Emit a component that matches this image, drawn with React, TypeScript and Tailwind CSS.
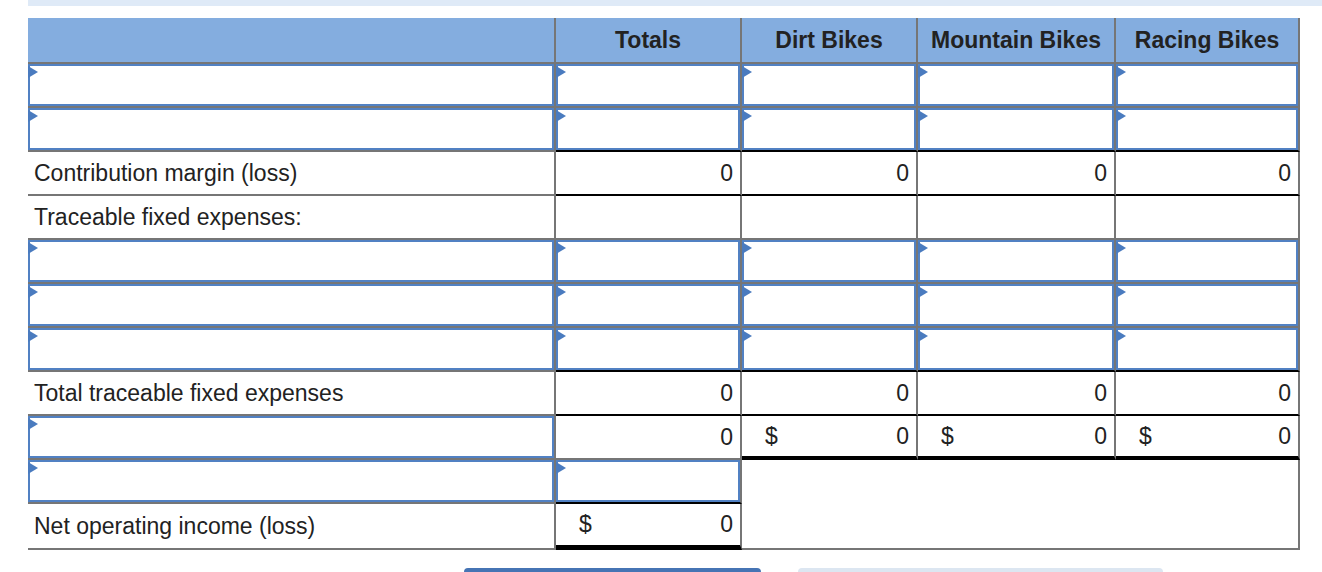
import React from "react";

const font = "font-['Liberation_Sans',Arial,Helvetica,sans-serif]";

type Bottom = "gray" | "black" | "thick" | "thicker";

const bottomClass: Record<Bottom, string> = {
  gray: "border-b-2 border-b-[#767676]",
  black: "border-b-2 border-b-black",
  thick: "border-b-[4px] border-b-black",
  thicker: "border-b-[5px] border-b-black",
};

const HeaderCell = ({ text }: { text?: string }) => (
  <div className="flex items-center justify-center border-r-2 border-b-2 border-[#767676] bg-[#84addf] text-[23px] font-bold text-[#222]">
    {text}
  </div>
);

const InputCell = ({ bottom = "gray" }: { bottom?: Bottom }) => (
  <div className={`border-r-2 border-r-[#767676] ${bottomClass[bottom]}`}>
    <div className="relative h-full w-full border-2 border-[#5181c3] bg-white">
      <svg
        className="absolute left-[-2px] top-0"
        width="10"
        height="12"
        viewBox="0 0 10 12"
      >
        <polygon points="0,0 10,6 0,12" fill="#4a7bbf" />
      </svg>
    </div>
  </div>
);

const LabelCell = ({ text }: { text?: string }) => (
  <div className="flex items-center border-r-2 border-b-2 border-[#767676] pl-[6px] text-[23px] text-[#222]">
    {text}
  </div>
);

const NumCell = ({
  value,
  dollar = false,
  bottom = "black",
}: {
  value?: string;
  dollar?: boolean;
  bottom?: Bottom;
}) => (
  <div
    className={`flex items-center justify-between border-r-2 border-r-[#767676] pl-[23px] pr-[7px] text-[23px] text-[#222] ${bottomClass[bottom]}`}
  >
    <span>{dollar ? "$" : ""}</span>
    <span>{value}</span>
  </div>
);

export default function App() {
  return (
    <div className={`min-h-screen bg-white ${font}`}>
      <div className="ml-[28px] h-[6px] bg-[#dfeaf7]" />

      <div className="ml-[28px] mt-[12px] grid w-[1272px] grid-cols-[528px_186px_176px_198px_184px] grid-rows-[46px_repeat(10,44px)_46px]">
        {/* header */}
        <HeaderCell />
        <HeaderCell text="Totals" />
        <HeaderCell text="Dirt Bikes" />
        <HeaderCell text="Mountain Bikes" />
        <HeaderCell text="Racing Bikes" />

        {/* sales / variable expenses */}
        <InputCell />
        <InputCell />
        <InputCell />
        <InputCell />
        <InputCell />

        <InputCell />
        <InputCell bottom="black" />
        <InputCell bottom="black" />
        <InputCell bottom="black" />
        <InputCell bottom="black" />

        <LabelCell text="Contribution margin (loss)" />
        <NumCell value="0" />
        <NumCell value="0" />
        <NumCell value="0" />
        <NumCell value="0" />

        <LabelCell text="Traceable fixed expenses:" />
        <NumCell bottom="gray" />
        <NumCell bottom="gray" />
        <NumCell bottom="gray" />
        <NumCell bottom="gray" />

        <InputCell />
        <InputCell />
        <InputCell />
        <InputCell />
        <InputCell />

        <InputCell />
        <InputCell />
        <InputCell />
        <InputCell />
        <InputCell />

        <InputCell />
        <InputCell bottom="black" />
        <InputCell bottom="black" />
        <InputCell bottom="black" />
        <InputCell bottom="black" />

        <LabelCell text="Total traceable fixed expenses" />
        <NumCell value="0" />
        <NumCell value="0" />
        <NumCell value="0" />
        <NumCell value="0" />

        {/* segment margin */}
        <InputCell />
        <NumCell value="0" bottom="gray" />
        <NumCell value="0" dollar bottom="thick" />
        <NumCell value="0" dollar bottom="thick" />
        <NumCell value="0" dollar bottom="thick" />

        {/* common fixed expenses */}
        <InputCell />
        <InputCell bottom="black" />
        <div className="col-span-3 row-span-2 border-r-2 border-b-2 border-[#767676]" />

        <LabelCell text="Net operating income (loss)" />
        <NumCell value="0" dollar bottom="thicker" />
      </div>

      <div className="mt-[18px] flex gap-[37px] pl-[464px]">
        <div className="h-10 w-[297px] rounded-t-[4px] bg-[#4674b4]" />
        <div className="h-10 w-[365px] rounded-t-[4px] bg-[#dce6f1]" />
      </div>
    </div>
  );
}
